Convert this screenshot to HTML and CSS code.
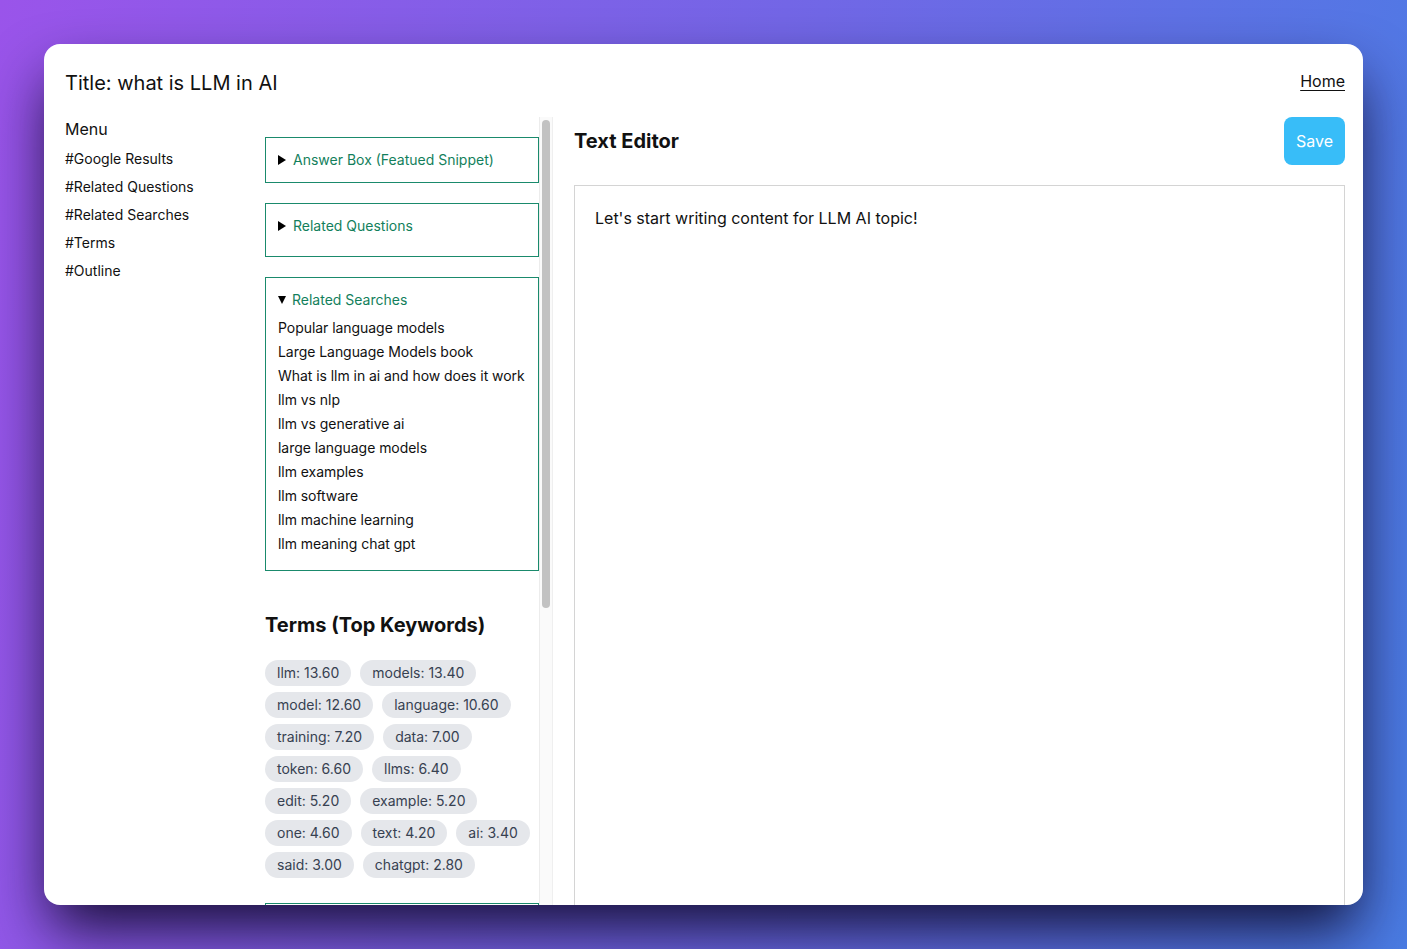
FILE: index.html
```html
<!DOCTYPE html>
<html lang="en">
<head>
<meta charset="utf-8">
<title>what is LLM in AI</title>
<link rel="stylesheet" href="styles.css">
</head>
<body>
<div class="card">
  <header class="topbar">
    <h1 class="title">Title: what is LLM in AI</h1>
    <a class="home" href="#">Home</a>
  </header>
  <div class="columns">
    <nav class="menu">
      <div class="menu-title">Menu</div>
      <a href="#google">#Google Results</a>
      <a href="#questions">#Related Questions</a>
      <a href="#searches">#Related Searches</a>
      <a href="#terms">#Terms</a>
      <a href="#outline">#Outline</a>
    </nav>
    <div class="middle">
      <div class="middle-content">
        <details class="box" id="google">
          <summary><i class="caret"></i><span>Answer Box (Featued Snippet)</span></summary>
        </details>
        <details class="box box-tall" id="questions">
          <summary><i class="caret"></i><span>Related Questions</span></summary>
        </details>
        <details class="box" id="searches" open>
          <summary><i class="caret"></i><span>Related Searches</span></summary>
          <ul class="searches">
            <li>Popular language models</li>
            <li>Large Language Models book</li>
            <li>What is llm in ai and how does it work</li>
            <li>llm vs nlp</li>
            <li>llm vs generative ai</li>
            <li>large language models</li>
            <li>llm examples</li>
            <li>llm software</li>
            <li>llm machine learning</li>
            <li>llm meaning chat gpt</li>
          </ul>
        </details>
        <section class="terms" id="terms">
          <h2>Terms (Top Keywords)</h2>
          <div class="chips">
            <span class="chip">llm: 13.60</span>
            <span class="chip">models: 13.40</span>
            <span class="chip">model: 12.60</span>
            <span class="chip">language: 10.60</span>
            <span class="chip">training: 7.20</span>
            <span class="chip">data: 7.00</span>
            <span class="chip">token: 6.60</span>
            <span class="chip">llms: 6.40</span>
            <span class="chip">edit: 5.20</span>
            <span class="chip">example: 5.20</span>
            <span class="chip">one: 4.60</span>
            <span class="chip">text: 4.20</span>
            <span class="chip">ai: 3.40</span>
            <span class="chip">said: 3.00</span>
            <span class="chip">chatgpt: 2.80</span>
          </div>
        </section>
        <div class="box box-outline" id="outline"></div>
      </div>
      <div class="rail" aria-hidden="true"><div class="thumb"></div></div>
    </div>
    <main class="editor-col">
      <div class="editor-head">
        <h2>Text Editor</h2>
        <button class="save" type="button">Save</button>
      </div>
      <div class="editor" contenteditable="true">Let's start writing content for LLM AI topic!</div>
    </main>
  </div>
</div>
</body>
</html>
```

FILE: styles.css
```css
* { box-sizing: border-box; }

html, body { height: 100%; }

body {
  margin: 0;
  height: 949px;
  overflow: hidden;
  font-family: Inter, "Noto Sans", "Liberation Sans", sans-serif;
  color: #111;
  background: linear-gradient(100deg, #9a54ea 0%, #7366e6 50%, #4a7ce4 100%);
  padding: 44px;
}

.card {
  height: 861px;
  background: #fff;
  border-radius: 16px;
  overflow: hidden;
  display: flex;
  flex-direction: column;
  padding: 24px 18px 0 21px;
  box-shadow: 0 30px 60px -6px rgba(10, 6, 35, 0.9);
}

.topbar {
  display: flex;
  justify-content: space-between;
  align-items: center;
  height: 30px;
  margin-bottom: 19px;
}

.title {
  margin: 0;
  font-size: 20px;
  font-weight: 400;
  line-height: 28px;
  color: #111;
}

.home {
  color: #111;
  font-size: 16px;
  text-decoration: underline;
  text-underline-offset: 3px;
  margin-top: -4px;
}

.columns {
  flex: 1;
  min-height: 0;
  display: grid;
  grid-template-columns: 200px 288px 1fr;
}

.menu {
  display: flex;
  flex-direction: column;
  gap: 8px;
}

.menu-title {
  font-size: 16px;
  line-height: 24px;
}

.menu a {
  color: #111;
  text-decoration: none;
  font-size: 14px;
  line-height: 20px;
}

.middle {
  display: flex;
  height: 100%;
  overflow: hidden;
}

.middle-content {
  width: 274px;
  flex: none;
  padding-top: 20px;
}

.rail {
  width: 14px;
  flex: none;
  background: #fafafa;
  border-left: 1px solid #ececec;
  border-right: 1px solid #efefef;
  padding: 3px 2px;
}

.thumb {
  height: 488px;
  background: #c2c2c2;
  border-radius: 4px;
}

.box {
  border: 1px solid #1a8a6c;
  padding: 12px;
  margin-bottom: 20px;
  font-size: 14px;
}

.box-tall { padding-bottom: 20px; }

.box summary {
  display: flex;
  align-items: center;
  height: 20px;
  list-style: none;
  cursor: pointer;
  font-size: 14px;
  line-height: 20px;
}

.box summary::-webkit-details-marker { display: none; }

.caret {
  width: 0;
  height: 0;
  border-left: 8px solid #000;
  border-top: 5px solid transparent;
  border-bottom: 5px solid transparent;
  margin-right: 7px;
}

.box[open] .caret {
  border-left: 4.5px solid transparent;
  border-right: 4.5px solid transparent;
  border-top: 8px solid #000;
  border-bottom: 0;
  margin-right: 6px;
}

.box summary span { color: #137f5c; }

.box[open] { padding-bottom: 14px; }

.searches {
  list-style: none;
  margin: 6px 0 0 0;
  padding: 0;
}

.searches li {
  line-height: 24px;
  font-size: 14px;
  color: #111;
  white-space: nowrap;
  letter-spacing: -0.05px;
}

.box-outline { height: 440px; }

.terms { margin-top: 40px; margin-bottom: 25px; }

.terms h2 {
  margin: 0 0 21px 0;
  font-size: 20px;
  font-weight: 700;
  line-height: 28px;
}

.chips {
  display: flex;
  flex-wrap: wrap;
  gap: 6px 9px;
}

.chip {
  background: #e5e7eb;
  color: #374151;
  font-size: 14px;
  line-height: 26px;
  height: 26px;
  padding: 0 12px;
  border-radius: 13px;
}

.editor-col {
  margin-left: 21px;
  display: flex;
  flex-direction: column;
}

.editor-head {
  display: flex;
  justify-content: space-between;
  align-items: center;
  height: 48px;
  margin-bottom: 20px;
}

.editor-head h2 {
  margin: 0;
  font-size: 20px;
  font-weight: 700;
  line-height: 28px;
}

.save {
  background: #38bdf8;
  color: #fff;
  border: none;
  border-radius: 8px;
  width: 61px;
  height: 48px;
  font-family: inherit;
  font-size: 16px;
  cursor: pointer;
}

.editor {
  border: 1px solid #d4d4d4;
  height: 760px;
  flex: none;
  padding: 20px;
  font-size: 16px;
  line-height: 24px;
  color: #111;
  outline: none;
}
```
